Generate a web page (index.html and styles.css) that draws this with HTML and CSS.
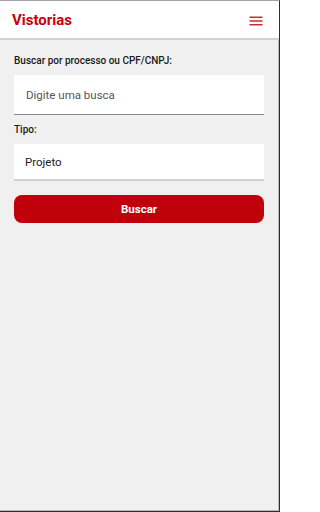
FILE: index.html
```html
<!DOCTYPE html>
<html lang="pt">
<head>
<meta charset="utf-8">
<link rel="stylesheet" href="styles.css">
</head>
<body>
<div class="frame">
  <header class="topbar">
    <h1 class="title">Vistorias</h1>
    <button class="menu" aria-label="Menu">
      <svg width="14" height="10" viewBox="0 0 14 10"><path d="M0.5 1.25H13.5M0.5 5H13.5M0.5 8.75H13.5" stroke="#cc2a30" stroke-width="1.5" fill="none"/></svg>
    </button>
  </header>
  <main class="content">
    <label class="label">Buscar por processo ou CPF/CNPJ:</label>
    <div class="field field-input"><span class="placeholder">Digite uma busca</span></div>
    <label class="label">Tipo:</label>
    <div class="field field-select"><span class="value">Projeto</span></div>
    <button class="btn">Buscar</button>
  </main>
</div>
</body>
</html>
```
FILE: styles.css
```css
* { box-sizing: border-box; }
html, body { margin: 0; padding: 0; background: #fff; }
body { font-family: Roboto, "Noto Sans", sans-serif; }
.frame {
  width: 280px;
  height: 512px;
  display: flex;
  flex-direction: column;
  background: #f0f0f0;
  border-top: 1px solid #a2a2a2;
  border-right: 1px solid #2e2e2e;
  border-bottom: 1px solid #2e2e2e;
  box-shadow: inset -1px -1px 0 #b8b8b8;
}
.topbar {
  height: 39px;
  background: #fff;
  border-bottom: 2px solid #d2d2d2;
  display: flex;
  align-items: center;
  justify-content: space-between;
  padding: 0 16px 0 12px;
  flex-shrink: 0;
}
.title {
  margin: 0;
  font-size: 15px;
  font-weight: 700;
  color: #c8000a;
  line-height: 1;
  margin-top: 2px;
}
.menu {
  border: 0;
  background: none;
  padding: 0;
  display: flex;
  margin-top: 2px;
}
.content {
  padding: 15px 15px 0 14px;
  display: flex;
  flex-direction: column;
}
.label {
  font-size: 10px;
  line-height: 12px;
  font-weight: 500;
  color: #1a1a1a;
  margin-bottom: 8px;
}
.field {
  background: #fff;
  display: flex;
  align-items: center;
}
.field-input {
  height: 40px;
  padding: 1px 12px 0;
  border-bottom: 1px solid #8a8a8a;
  margin-bottom: 9px;
}
.field-select {
  height: 37px;
  padding: 0 11px;
  border-bottom: 2px solid #d0d0d0;
  margin-bottom: 14px;
}
.placeholder {
  font-size: 11.5px;
  color: #555;
}
.value {
  font-size: 11.5px;
  color: #222;
}
.btn {
  height: 28px;
  border: 0;
  border-radius: 8px;
  background: #c0000a;
  color: #fff;
  font-family: Roboto, "Noto Sans", sans-serif;
  font-size: 11.5px;
  font-weight: 700;
  padding: 0;
}
```
